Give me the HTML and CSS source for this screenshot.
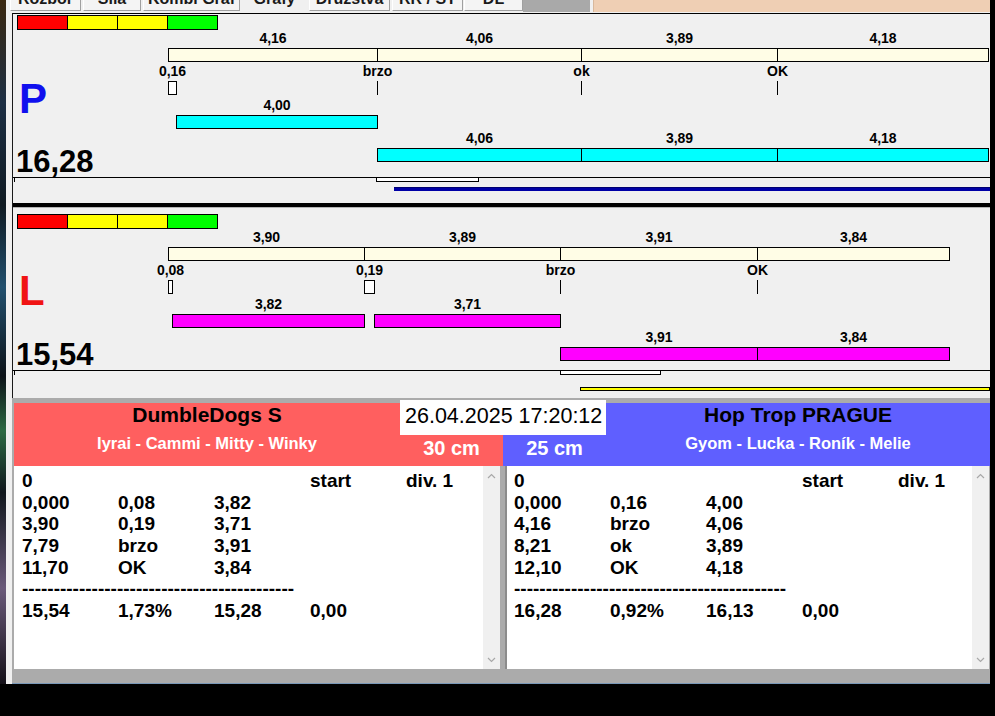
FILE: index.html
```html
<!DOCTYPE html>
<html>
<head>
<meta charset="utf-8">
<title>Grafy</title>
<link rel="stylesheet" href="styles.css">
</head>
<body>
<div class="screen">
  <div class="desk"></div>
  <div class="window">
    <div class="tabs">
      <div class="tab"><span>Rozbor</span></div>
      <div class="tab"><span>Síla</span></div>
      <div class="tab"><span>Kombi Graf</span></div>
      <div class="tab tab-on"><span>Grafy</span></div>
      <div class="tab"><span>Družstva</span></div>
      <div class="tab"><span>RR / ST</span></div>
      <div class="tab"><span>DL</span></div>
      <div class="tab-gray"></div>
      <div class="tab-peach"></div>
    </div>

    <div class="graph">
      <section class="run run-p">
        <div class="legend"><i class="lg-red"></i><i class="lg-yel"></i><i class="lg-yel"></i><i class="lg-grn"></i></div>
        <div class="labels r-a">
          <span class="seg" style="width:210px">4,16</span><span class="seg" style="width:205px">4,06</span><span class="seg" style="width:197px">3,89</span><span class="seg" style="width:212px">4,18</span>
        </div>
        <div class="bar ivory r-ivory">
          <span class="seg" style="width:210px"></span><span class="seg" style="width:205px"></span><span class="seg" style="width:197px"></span><span class="seg" style="width:212px"></span>
        </div>
        <div class="ticklbl">
          <span style="margin-left:-25.5px">0,16</span><span style="margin-left:145px">brzo</span><span style="margin-left:144px">ok</span><span style="margin-left:136px">OK</span>
        </div>
        <div class="ticks">
          <span class="tk-rect" style="width:9px"></span><span class="tk-line" style="margin-left:200px"></span><span class="tk-line" style="margin-left:203px"></span><span class="tk-line" style="margin-left:195px"></span>
        </div>
        <div class="side side-p">P</div>
        <div class="labels r-b">
          <span class="seg" style="width:202px;margin-left:8px">4,00</span>
        </div>
        <div class="bar cyan r-bar1">
          <span class="seg" style="width:202px;margin-left:8px"></span>
        </div>
        <div class="labels r-c">
          <span class="seg" style="width:205px;margin-left:209px">4,06</span><span class="seg" style="width:197px">3,89</span><span class="seg" style="width:212px">4,18</span>
        </div>
        <div class="bar cyan r-bar2">
          <span class="seg" style="width:205px;margin-left:209px"></span><span class="seg" style="width:197px"></span><span class="seg" style="width:212px"></span>
        </div>
        <div class="total">16,28</div>
      </section>
      <div class="strip">
        <div class="strip-marks"><span class="stub"></span><span class="cur" style="width:103px;margin-left:361px"></span></div>
        <div class="track track-blue" style="margin-left:381px"></div>
      </div>

      <div class="sep"></div>

      <section class="run run-l">
        <div class="legend"><i class="lg-red"></i><i class="lg-yel"></i><i class="lg-yel"></i><i class="lg-grn"></i></div>
        <div class="labels r-a">
          <span class="seg" style="width:197px">3,90</span><span class="seg" style="width:197px">3,89</span><span class="seg" style="width:198px">3,91</span><span class="seg" style="width:193px">3,84</span>
        </div>
        <div class="bar ivory r-ivory">
          <span class="seg" style="width:197px"></span><span class="seg" style="width:197px"></span><span class="seg" style="width:198px"></span><span class="seg" style="width:193px"></span>
        </div>
        <div class="ticklbl">
          <span style="margin-left:-27.5px">0,08</span><span style="margin-left:139px">0,19</span><span style="margin-left:131px">brzo</span><span style="margin-left:137px">OK</span>
        </div>
        <div class="ticks">
          <span class="tk-rect" style="width:5px"></span><span class="tk-rect" style="width:11px;margin-left:191px"></span><span class="tk-line" style="margin-left:185px"></span><span class="tk-line" style="margin-left:196px"></span>
        </div>
        <div class="side side-l">L</div>
        <div class="labels r-b">
          <span class="seg" style="width:193px;margin-left:4px">3,82</span><span class="seg" style="width:187px;margin-left:9px">3,71</span>
        </div>
        <div class="bar magenta r-bar1">
          <span class="seg" style="width:193px;margin-left:4px"></span><span class="seg" style="width:187px;margin-left:9px"></span>
        </div>
        <div class="labels r-c">
          <span class="seg" style="width:198px;margin-left:392px">3,91</span><span class="seg" style="width:193px">3,84</span>
        </div>
        <div class="bar magenta r-bar2">
          <span class="seg" style="width:198px;margin-left:392px"></span><span class="seg" style="width:193px"></span>
        </div>
        <div class="total">15,54</div>
      </section>
      <div class="strip strip-l">
        <div class="strip-marks"><span class="stub"></span><span class="cur" style="width:101px;margin-left:545px"></span></div>
        <div class="track track-yellow" style="margin-left:567px"></div>
      </div>
    </div>

    <div class="bottom">
      <div class="team team-left">
        <div class="head head-red">
          <div class="who">
            <div class="name">DumbleDogs S</div>
            <div class="dogs">Iyrai - Cammi - Mitty - Winky</div>
          </div>
          <div class="cm">30 cm</div>
        </div>
        <div class="list">
          <div class="rows">
            <div class="row"><span>0</span><span></span><span></span><span>start</span><span>div. 1</span></div>
            <div class="row"><span>0,000</span><span>0,08</span><span>3,82</span></div>
            <div class="row"><span>3,90</span><span>0,19</span><span>3,71</span></div>
            <div class="row"><span>7,79</span><span>brzo</span><span>3,91</span></div>
            <div class="row"><span>11,70</span><span>OK</span><span>3,84</span></div>
            <div class="row"><span class="dash">-------------------------------------------</span></div>
            <div class="row"><span>15,54</span><span>1,73%</span><span>15,28</span><span>0,00</span></div>
          </div>
          <div class="scroll">
            <svg width="9" height="6" viewBox="0 0 9 6"><polyline points="1,5 4.5,1.5 8,5" fill="none" stroke="#a8a8a8" stroke-width="1.2"/></svg>
            <svg width="9" height="6" viewBox="0 0 9 6"><polyline points="1,1 4.5,4.5 8,1" fill="none" stroke="#a8a8a8" stroke-width="1.2"/></svg>
          </div>
        </div>
      </div>

      <div class="team team-right">
        <div class="head head-blue">
          <div class="cm">25 cm</div>
          <div class="who">
            <div class="name">Hop Trop PRAGUE</div>
            <div class="dogs">Gyom - Lucka - Roník - Melie</div>
          </div>
        </div>
        <div class="list">
          <div class="rows">
            <div class="row"><span>0</span><span></span><span></span><span>start</span><span>div. 1</span></div>
            <div class="row"><span>0,000</span><span>0,16</span><span>4,00</span></div>
            <div class="row"><span>4,16</span><span>brzo</span><span>4,06</span></div>
            <div class="row"><span>8,21</span><span>ok</span><span>3,89</span></div>
            <div class="row"><span>12,10</span><span>OK</span><span>4,18</span></div>
            <div class="row"><span class="dash">-------------------------------------------</span></div>
            <div class="row"><span>16,28</span><span>0,92%</span><span>16,13</span><span>0,00</span></div>
          </div>
          <div class="scroll">
            <svg width="9" height="6" viewBox="0 0 9 6"><polyline points="1,5 4.5,1.5 8,5" fill="none" stroke="#a8a8a8" stroke-width="1.2"/></svg>
            <svg width="9" height="6" viewBox="0 0 9 6"><polyline points="1,1 4.5,4.5 8,1" fill="none" stroke="#a8a8a8" stroke-width="1.2"/></svg>
          </div>
        </div>
      </div>

      <div class="date">26.04.2025 17:20:12</div>
    </div>
  </div>
</div>
</body>
</html>
```

FILE: styles.css
```css
* { box-sizing: border-box; margin: 0; padding: 0; }
html, body { background: #000; }
body {
  width: 995px;
  height: 716px;
  overflow: hidden;
  font-family: "Liberation Sans", Arial, sans-serif;
  color: #000;
}
.screen { display: flex; height: 684px; }
.desk {
  width: 6px;
  background: linear-gradient(#3a2810, #1d2f44 15%, #0f1a22 30%, #22506e 42%, #0c1218 55%, #2d6a44 63%, #10161c 72%, #6a5a7a 86%, #141018);
}
.window {
  width: 984px;
  background: #f0f0f0;
  display: flex;
  flex-direction: column;
}

/* tabs */
.tabs {
  height: 13px;
  display: flex;
  align-items: flex-start;
  padding-left: 4px;
  overflow: hidden;
}
.tab {
  flex: none;
  height: 11px;
  background: #f4f4f4;
  border: 1px solid #a0a0a0;
  border-top: none;
  border-left-color: #ffffff;
  overflow: hidden;
  font-size: 16px;
  font-weight: bold;
  line-height: 18px;
  text-align: center;
  color: #1a1a1a;
}
.tab span { display: block; margin-top: -10px; }
.tab:nth-child(1) { width: 71px; }
.tab:nth-child(2) { width: 58px; margin-left: 2px; }
.tab:nth-child(3) { width: 97px; margin-left: 2px; }
.tab:nth-child(4) { width: 69px; }
.tab:nth-child(5) { width: 81px; }
.tab:nth-child(6) { width: 71px; margin-left: 2px; }
.tab:nth-child(7) { width: 59px; margin-left: 1px; }
.tab-on { border: none; background: #f0f0f0; height: 13px; }
.tab-gray { flex: none; width: 67px; height: 12px; background: #a9a9a9; }
.tab-peach { flex: 1; height: 12px; margin-left: 3px; background: #efcfb4; border-left: 1px solid #d8b89c; }

/* graph panel */
.graph {
  margin-left: 6px;
  width: 978px;
  height: 385px;
  border-top: 1px solid #000;
  border-left: 1px solid #1a1a1a;
  background: #f0f0f0;
  display: flex;
  flex-direction: column;
  flex: none;
}
.run {
  display: grid;
  grid-template-columns: 155px 1fr;
  grid-template-rows: 16px 18px 14px 19px 14px 20px 14px 19px 14px 15px;
  flex: none;
}
.run-l { grid-template-rows: 21px 18px 14px 19px 14px 20px 14px 19px 14px 9px; }

.legend {
  grid-column: 1 / 3;
  grid-row: 1;
  align-self: end;
  margin-left: 4px;
  width: 201px;
  height: 15px;
  display: flex;
  border: 1px solid #000;
}
.legend i { width: 50px; border-right: 1px solid #000; }
.legend i:last-child { flex: 1; border-right: none; }
.lg-red { background: #ff0000; }
.lg-yel { background: #ffff00; }
.lg-grn { background: #00ff00; }

.labels, .ticklbl {
  grid-column: 2;
  display: flex;
  font-size: 14px;
  font-weight: bold;
  line-height: 16px;
  white-space: nowrap;
}
.labels span { flex: none; text-align: center; }
.seg + .seg { margin-left: -1px; }
.r-a { grid-row: 2; }
.r-b { grid-row: 6; margin-top: 2px; }
.r-c { grid-row: 8; margin-top: 1px; }
.r-ivory { grid-row: 3; }
.r-bar1 { grid-row: 7; }
.r-bar2 { grid-row: 9; }

.bar { grid-column: 2; display: flex; height: 14px; }
.bar .seg { flex: none; height: 14px; border: 1px solid #000; }
.ivory .seg { background: #fffde6; }
.cyan .seg { background: #00ffff; }
.magenta .seg { background: #ff00ff; }

.ticklbl { grid-row: 4; line-height: 18px; }
.ticklbl span { flex: none; width: 60px; text-align: center; }
.ticks { grid-column: 2; grid-row: 5; display: flex; height: 14px; }
.tk-rect { flex: none; height: 14px; border: 1px solid #000; background: #fff; }
.tk-line { flex: none; width: 1px; height: 14px; background: #000; }

.side {
  grid-column: 1;
  grid-row: 4 / 8;
  align-self: center;
  font-size: 42px;
  font-weight: bold;
  line-height: 42px;
  padding-left: 6px;
}
.side-p { color: #1010ee; margin-top: 7px; }
.side-l { color: #f01414; margin-bottom: 7px; }
.total {
  grid-column: 1;
  grid-row: 8 / 11;
  align-self: end;
  font-size: 31px;
  font-weight: bold;
  line-height: 30px;
  padding-left: 3px;
  white-space: nowrap;
}

.strip { flex: none; height: 26px; border-top: 1px solid #000; }
.strip-l { height: 28px; }
.strip-marks { display: flex; height: 4px; }
.stub { flex: none; width: 1px; height: 4px; margin-left: 1px; background: #000; }
.cur { flex: none; height: 5px; margin-top: -1px; border: 1px solid #000; background: #fff; }
.track { height: 4px; margin-top: 5px; }
.track-blue { background: #0000a6; border-top: 1px solid #000070; }
.track-yellow { margin-top: 12px; background: #ffff00; border: 1px solid #000; }

.sep { flex: none; height: 5px; border-top: 4px solid #000; border-bottom: 1px solid #b4b4b4; }

/* bottom panels */
.bottom {
  position: relative;
  margin-left: 6px;
  width: 978px;
  height: 286px;
  flex: none;
  background: #ababab;
  padding: 5px 0 14px 2px;
  border-bottom: 1px solid #7a98b8;
  display: grid;
  grid-template-columns: 489px 487px;
}
.team { display: flex; flex-direction: column; min-width: 0; }
.head { height: 63px; display: grid; flex: none; }
.head-red { background: #ff5f5f; grid-template-columns: 386px 103px; }
.head-blue { background: #5f5fff; grid-template-columns: 103px 1fr; }
.name {
  font-size: 21px;
  font-weight: bold;
  line-height: 24px;
  text-align: center;
  white-space: nowrap;
}
.dogs {
  margin-top: 6px;
  font-size: 16.5px;
  font-weight: bold;
  line-height: 20px;
  color: #fff;
  text-align: center;
  white-space: nowrap;
}
.cm {
  padding-top: 33px;
  font-size: 20px;
  font-weight: bold;
  line-height: 24px;
  color: #fff;
  text-align: center;
}
.list { flex: 1; display: flex; background: #fff; min-width: 0; }
.team-left .list { margin-right: 3px; }
.team-right .list { margin-left: 2px; margin-right: 1px; border-left: 2px solid #8c8c8c; }
.rows { flex: 1; min-width: 0; overflow: hidden; padding: 4px 0 0 8px; }
.team-right .rows { padding-left: 7px; }
.row {
  display: grid;
  grid-template-columns: repeat(5, 96px);
  height: 21.7px;
  font-size: 19px;
  font-weight: bold;
  line-height: 21.7px;
  white-space: nowrap;
}
.dash { grid-column: 1 / 6; }
.scroll {
  flex: none;
  width: 17px;
  background: #f0f0f0;
  display: flex;
  flex-direction: column;
  justify-content: space-between;
  align-items: center;
  padding: 7px 0 6px;
}
.date {
  position: absolute;
  left: 388px;
  top: 2px;
  width: 206px;
  height: 35px;
  background: #fff;
  padding-left: 5px;
  font-size: 21.5px;
  line-height: 32px;
  white-space: nowrap;
}
```
